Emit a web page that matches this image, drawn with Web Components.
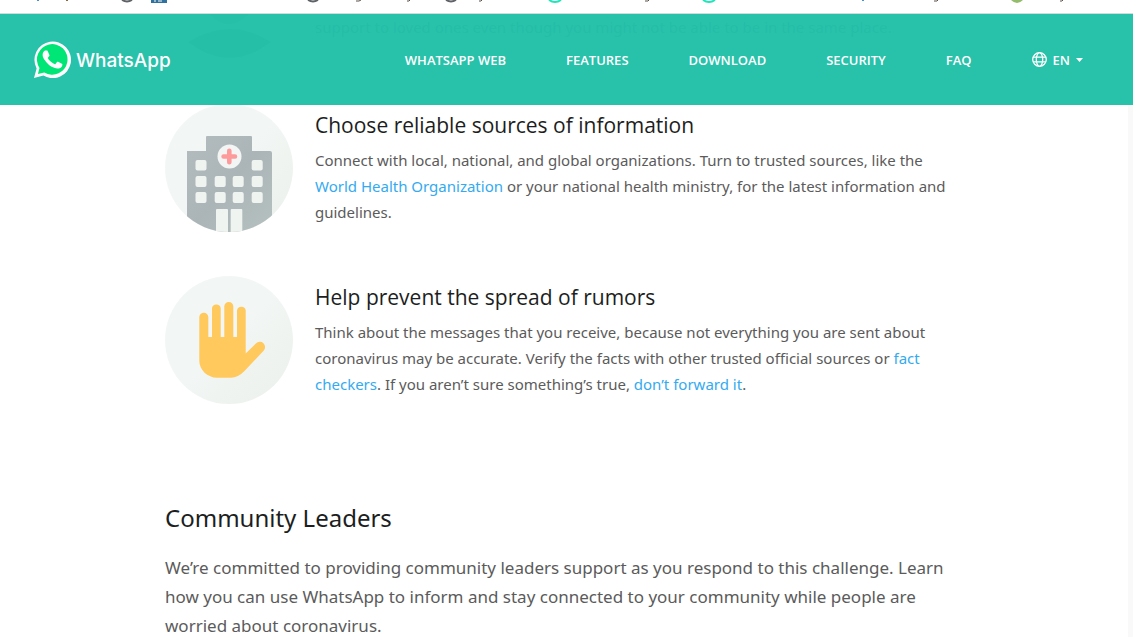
<!DOCTYPE html>
<html lang="en">
<head>
<meta charset="utf-8">
<title>WhatsApp</title>
<style>
html, body { height: 100%; }
body { margin: 0; overflow: hidden; background: #fff; font-family: "Noto Sans", "Open Sans", sans-serif; }
</style>
</head>
<body>
<wa-app></wa-app>
<script>
const define = (name, html) => customElements.define(name, class extends HTMLElement {
  constructor() {
    super();
    const t = document.createElement('template');
    t.innerHTML = html;
    this.attachShadow({ mode: 'open' }).append(t.content.cloneNode(true));
  }
});

define('bookmarks-edge', `
<style>
:host { display: block; height: 13px; border-bottom: 1px solid #d5dbdb; background: #fff; overflow: hidden; }
svg { display: block; }
</style>
<svg width="1133" height="13" viewBox="0 0 1133 13" fill="none" aria-hidden="true">
  <path d="M38 0v1M863 0v1" stroke="#4b91d0" stroke-width="2"/>
  <path d="M67 0v1" stroke="#8a6b40" stroke-width="2"/>
  <path d="M122 0q5 3 10 0M308 0q5 3 10 0M446 0q5 3 10 0" stroke="#5f6368" stroke-width="2"/>
  <path d="M151 0h16v3h-16z" fill="#31719f"/><path d="M155 0v2M158 1h4" stroke="#fff"/>
  <path d="M356 1h3l2-1M407 1h2l1-1M479 1h2l1-1M645 1h3l1-1M934 1h3l1-1M1060 1h2l1-1" stroke="#5a5048"/>
  <path d="M549 0q6 4 12 0M703 0q6 4 12 0" stroke="#1fe5b8" stroke-width="2"/>
  <path d="M1011 0h12q-6 6-12 0z" fill="#93bd6c"/>
</svg>`);

define('wa-logo', `
<style>
:host { display: block; }
a { display: flex; align-items: center; gap: 5px; color: #fff; text-decoration: none; font: 500 19px/24px Inter, sans-serif; }
svg { display: block; }
span { padding-top: 2px; }
</style>
<a href="#"><svg width="37" height="37" viewBox="0 0 37 37" aria-hidden="true">
  <path fill="#fff" d="M0 37l2.600-9.500A18.300 18.300 0 1 1 9.400 34.600z"/>
  <path fill="#00e676" d="M3.900 33.100l1.600-6.200A15.300 15.300 0 1 1 10.300 31.500z"/>
  <path fill="#fff" d="M13.800 10.200c-.4-.8-.7-.8-1.200-.8h-.9c-.4 0-.9.100-1.400.6-.5.600-1.700 1.700-1.700 4s1.800 4.700 2.100 5c.3.400 3.400 5.400 8.300 7.300 4.100 1.600 4.900 1.300 5.800 1.200.9-.1 2.800-1.100 3.200-2.300.4-1.100.4-2 .3-2.200-.2-.3-.5-.4-.9-.6l-3.300-1.600c-.4-.2-.8-.2-1.100.2l-1.500 1.900c-.3.300-.5.400-1 .1-.5-.2-2-.7-3.900-2.400-1.400-1.200-2.400-2.800-2.700-3.300-.3-.4 0-.7.2-.9l1.200-1.500c.1-.4.300-.6.100-1z"/>
</svg><span>WhatsApp</span></a>`);

define('nav-link', `
<style>
:host { display: flex; }
a { color: #fff; text-decoration: none; font: 600 13px/20px "Open Sans", sans-serif; white-space: nowrap; }
</style>
<a href="#"><slot></slot></a>`);

define('language-picker', `
<style>
:host { display: block; }
button { display: flex; align-items: center; gap: 6px; padding: 0; border: 0; background: none; color: #fff; font: 600 13px/20px "Open Sans", sans-serif; }
svg { display: block; }
</style>
<button type="button" aria-label="Language: EN"><svg width="15" height="16" viewBox="0 0 15 16" fill="none" stroke="#fff" stroke-width="1.300" aria-hidden="true">
  <circle cx="7.500" cy="7.500" r="6.800"/><ellipse cx="7.500" cy="7.500" rx="3.200" ry="6.800"/><path d="M1 5.100h13M1 9.900h13"/>
</svg><span>EN</span><svg width="7" height="4" viewBox="0 0 7 4" aria-hidden="true"><path d="M0 0h7L3.500 4z" fill="#fff"/></svg></button>`);

define('site-header', `
<style>
:host { display: flex; align-items: center; justify-content: space-between; box-sizing: border-box; height: 91px; padding: 0 50px 0 34px; background: rgba(33, 191, 167, .97); }
nav { display: flex; align-items: center; gap: 60px; }
</style>
<wa-logo></wa-logo>
<nav>
  <nav-link>WHATSAPP WEB</nav-link><nav-link>FEATURES</nav-link><nav-link>DOWNLOAD</nav-link><nav-link>SECURITY</nav-link><nav-link>FAQ</nav-link>
  <language-picker></language-picker>
</nav>`);

define('people-art', `
<style>:host, svg { display: block; }</style>
<svg width="128" height="91" viewBox="0 0 128 91" aria-hidden="true">
  <path d="M10 0h109a64 64 0 0 1-109 0z" fill="#f0f4f2"/>
  <path d="M44 0h40q-20 20-40 0z" fill="#b5c4c4"/>
  <path d="M23 28q42-26 83 0-41 32-83 0z" fill="#a3b8b8"/>
</svg>`);

const disc = id => `<defs>
  <linearGradient id="g${id}" x1="0" y1="0" x2="1" y2="1"><stop offset=".5" stop-color="#f2f6f4"/><stop offset=".85" stop-color="#edf2ee"/><stop offset="1" stop-color="#f1f5f2"/></linearGradient>
  <clipPath id="c${id}"><circle cx="64" cy="64" r="64"/></clipPath></defs>
  <circle cx="64" cy="64" r="64" fill="url(#g${id})"/>`;

define('hospital-art', `
<style>:host, svg { display: block; }</style>
<svg width="128" height="128" viewBox="0 0 128 128" aria-hidden="true">${disc('h')}
  <defs><linearGradient id="b" x1="0" y1="0" x2="1" y2="1"><stop stop-color="#b3bbbd"/><stop offset=".5" stop-color="#abb5b8"/><stop offset="1" stop-color="#b5c0bf"/></linearGradient></defs>
  <g clip-path="url(#ch)">
    <path d="M22 47h19V33q0-1 1-1h44q1 0 1 1v14h18q2 0 2 2v79H22z" fill="url(#b)"/>
    <circle cx="64.500" cy="52.500" r="12" fill="#f2f5f3"/>
    <path d="M64.300 46.800v11.400M58.600 52.500H70" stroke="#fd9a9b" stroke-width="4.600" stroke-linecap="round"/>
    <g fill="#f0f4f1">
      <rect x="30.500" y="56" width="11" height="10.500" rx="2"/><rect x="86.700" y="56" width="11" height="10.500" rx="2"/>
      <rect x="30.500" y="72" width="11" height="11" rx="2"/><rect x="49.700" y="72" width="11" height="11" rx="2"/><rect x="67.700" y="72" width="11" height="11" rx="2"/><rect x="86.700" y="72" width="11" height="11" rx="2"/>
      <rect x="30.500" y="88" width="11" height="11" rx="2"/><rect x="49.700" y="88" width="11" height="11" rx="2"/><rect x="67.700" y="88" width="11" height="11" rx="2"/><rect x="86.700" y="88" width="11" height="11" rx="2"/>
      <rect x="51" y="105" width="12" height="30" rx="1"/><rect x="65.700" y="105" width="11.600" height="30" rx="1"/>
    </g>
  </g>
</svg>`);

define('hand-art', `
<style>:host, svg { display: block; }</style>
<svg width="128" height="128" viewBox="0 0 128 128" aria-hidden="true">${disc('p')}
  <path fill="#ffc95e" d="M34.300 41.200a4.500 4.500 0 0 1 9 0V61H47V32.300a4.400 4.400 0 0 1 8.700 0V61h3.600V30.500a4.500 4.500 0 0 1 9 0V61H72V34.400a4.400 4.400 0 0 1 8.700 0v43l10.200-10a5.300 5.300 0 0 1 7.700 7.400L79.500 95q-6.500 6.700-13.500 6.700H52.300c-10 0-18-8-18-17z"/>
</svg>`);

define('tip-item', `
<style>
:host { display: flex; align-items: flex-start; gap: 22px; height: 172px; }
.body { flex: 1; padding: 6px 10px 0 0; }
h3 { margin: 0 0 7px; font: 400 21px/30px "Open Sans", sans-serif; color: #1c1e21; }
p { margin: 0; font-size: 15px; line-height: 26px; color: #5b5b5b; }
::slotted(a) { color: #34aaf0; text-decoration: none; }
</style>
<slot name="art"></slot>
<div class="body"><h3><slot name="title"></slot></h3><p><slot></slot></p></div>`);

define('passed-tip', `
<style>
:host { display: flex; gap: 22px; height: 90px; overflow: hidden; }
p { margin: 0; font-size: 15px; line-height: 26px; color: #7b7b7b; }
</style>
<people-art></people-art><p><slot></slot></p>`);

define('page-section', `
<style>
:host { display: block; padding-top: 52px; }
h2 { margin: 0 0 17px; font-size: 24px; line-height: 36px; font-weight: 400; color: #1c1e21; }
p { margin: 0; font-size: 17px; line-height: 29px; color: #5b5b5b; }
</style>
<h2><slot name="title"></slot></h2><p><slot></slot></p>`);

define('wa-app', `
<style>
:host { display: flex; flex-direction: column; height: 100vh; }
.page { position: relative; flex: 1; min-height: 0; overflow: hidden; }
site-header { position: absolute; top: 0; left: 0; right: 0; z-index: 1; }
.scroll { box-sizing: border-box; min-height: 100%; border-right: 5px solid #f9f9f9; }
main { max-width: 798px; margin: 0 auto; }
</style>
<bookmarks-edge></bookmarks-edge>
<div class="page">
  <site-header></site-header>
  <div class="scroll"><main>
    <passed-tip>support to loved ones even though you might not be able to be in the same place.</passed-tip>
    <tip-item><hospital-art slot="art"></hospital-art><span slot="title">Choose reliable sources of information</span>Connect with local, national, and global organizations. Turn to trusted sources, like the <a href="#">World Health Organization</a> or your national health ministry, for the latest information and guidelines.</tip-item>
    <tip-item><hand-art slot="art"></hand-art><span slot="title">Help prevent the spread of rumors</span>Think about the messages that you receive, because not everything you are sent about coronavirus may be accurate. Verify the facts with other trusted official sources or <a href="#">fact checkers</a>. If you aren’t sure something’s true, <a href="#">don’t forward it</a>.</tip-item>
    <page-section><span slot="title">Community Leaders</span>We’re committed to providing community leaders support as you respond to this challenge. Learn how you can use WhatsApp to inform and stay connected to your community while people are worried about coronavirus.</page-section>
  </main></div>
</div>`);
</script>
</body>
</html>
